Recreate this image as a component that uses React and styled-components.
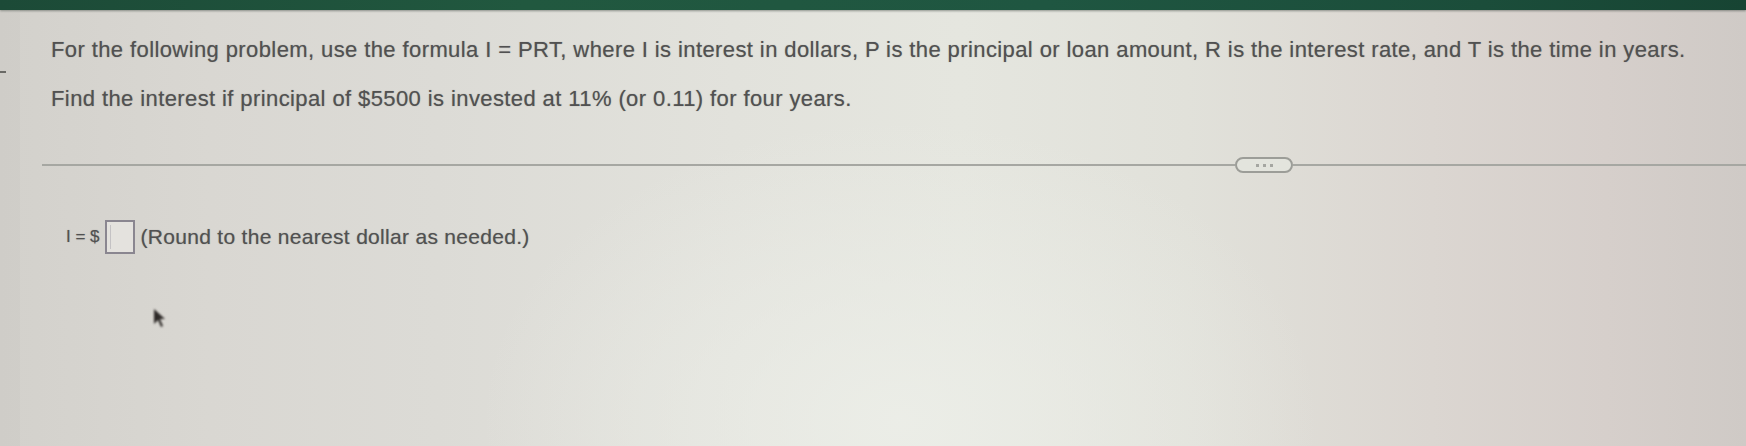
import React from "react";
import styled, { createGlobalStyle } from "styled-components";

const Global = createGlobalStyle`
  html, body { margin: 0; padding: 0; }
  body { width: 1746px; height: 446px; overflow: hidden; background: #dcdbd6; }
  #root { width: 1746px; height: 446px; }
`;

const Screen = styled.div`
  position: relative;
  width: 1746px;
  height: 446px;
  overflow: hidden;
  display: flex;
  flex-direction: column;
  font-family: "Liberation Sans", Arial, sans-serif;
  color: #515151;
  background:
    radial-gradient(ellipse 420px 300px at 900px 420px, rgba(236, 238, 232, 0.9), rgba(236, 238, 232, 0) 100%),
    linear-gradient(90deg, #d3d1cc 0%, #d9d7d2 12%, #dcdbd6 25%, #e2e2dc 42%, #e5e6df 55%, #e1e1da 68%, #dbd6d1 82%, #d6cfcb 92%, #cfcac6 100%);
`;

const TopBar = styled.div`
  flex: 0 0 10px;
  background: linear-gradient(90deg, #1c4a37 0%, #21583f 30%, #1f5641 60%, #1b4d3a 85%, #174433 100%);
  box-shadow: 0 1px 2px rgba(40, 50, 45, 0.45);
`;

const Body = styled.div`
  flex: 1;
  display: flex;
`;

const Gutter = styled.div`
  flex: 0 0 20px;
  padding-top: 61px;
  background: rgba(190, 186, 182, 0.15);
`;

const Tick = styled.div`
  width: 6px;
  height: 2px;
  background: #6a6a66;
  filter: blur(0.4px);
`;

const Main = styled.div`
  flex: 1;
  display: flex;
  flex-direction: column;
  padding-top: 28px;
  margin-left: -20px;
`;

const Question = styled.div`
  padding-left: 51px;
  display: flex;
  flex-direction: column;
  gap: 25px;
`;

const Line = styled.p`
  margin: 0;
  font-size: 22px;
  line-height: 24px;
  white-space: nowrap;
  letter-spacing: 0.4px;
  text-shadow: 0 0 1px rgba(80, 80, 80, 0.5);
`;

const Divider = styled.div`
  margin-top: 46px;
  margin-left: 42px;
  display: flex;
  align-items: center;
`;

const Rule = styled.div`
  height: 2px;
  background: #a6a7a2;
  flex: ${(p) => (p.$grow ? "1" : `0 0 ${p.$w}px`)};
`;

const MorePill = styled.div`
  flex: 0 0 auto;
  width: 54px;
  height: 12px;
  border: 2px solid #9c9d98;
  border-radius: 8px;
  background: #e3e4dd;
  display: flex;
  align-items: center;
  justify-content: center;
  gap: 4px;
`;

const Dot = styled.span`
  width: 3px;
  height: 3px;
  background: #a5a6a1;
`;

const AnswerRow = styled.div`
  margin-top: 47px;
  padding-left: 66px;
  display: flex;
  align-items: center;
  font-size: 21px;
  letter-spacing: 0.3px;
  text-shadow: 0 0 1px rgba(80, 80, 80, 0.5);
`;

const Prefix = styled.span`
  font-size: 17px;
  letter-spacing: 0px;
`;

const AnswerBox = styled.div`
  width: 26px;
  height: 30px;
  margin: 0 6px 0 5px;
  border: 2px solid #8a8690;
  background: #e4e2de;
  position: relative;
  &::after {
    content: "";
    position: absolute;
    left: 3px;
    top: 3px;
    bottom: 3px;
    width: 1px;
    background: #c4c2c4;
  }
`;

const Cursor = styled.svg`
  position: absolute;
  left: 153px;
  top: 308px;
  filter: blur(0.8px);
`;

export default function App() {
  return (
    <>
      <Global />
      <Screen>
        <TopBar />
        <Body>
          <Gutter>
            <Tick />
          </Gutter>
          <Main>
            <Question>
              <Line>
                For the following problem, use the formula I = PRT, where I is interest in dollars, P is the principal or loan amount, R is the interest rate, and T is the time in years.
              </Line>
              <Line>
                Find the interest if principal of $5500 is invested at 11% (or 0.11) for four years.
              </Line>
            </Question>
            <Divider>
              <Rule $w={1193} />
              <MorePill>
                <Dot />
                <Dot />
                <Dot />
              </MorePill>
              <Rule $grow />
            </Divider>
            <AnswerRow>
              <Prefix>I = $</Prefix>
              <AnswerBox />
              <span>(Round to the nearest dollar as needed.)</span>
            </AnswerRow>
          </Main>
        </Body>
        <Cursor width="14" height="20" viewBox="0 0 14 20">
          <path d="M1 1 L1 16 L5 12 L8 19 L10 18 L7 11 L12 11 Z" fill="#2e2a28" />
        </Cursor>
      </Screen>
    </>
  );
}
